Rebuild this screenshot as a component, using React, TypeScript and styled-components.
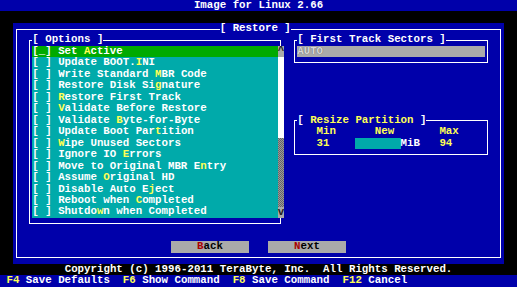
import React from "react";
import styled, { createGlobalStyle } from "styled-components";

// text-mode screen: 80 columns x 25 rows squeezed into 517x287
const CW = 517 / 80;
const RH = 287 / 25;
const cells = (n: number) => `${(n * CW).toFixed(3)}px`;
const rows = (n: number) => `${(n * RH).toFixed(3)}px`;

const C = {
  black: "#000000",
  blue: "#0000aa",
  cyan: "#00aaaa",
  green: "#00aa00",
  gray: "#aaaaaa",
  white: "#ffffff",
  yellow: "#ffff55",
  red: "#aa0000",
};

const GlobalStyle = createGlobalStyle`
  html, body {
    margin: 0;
    padding: 0;
    background: #000;
  }
  body {
    font-family: "Liberation Mono", "DejaVu Sans Mono", monospace;
    font-size: 10.77px;
    line-height: ${rows(1)};
    font-weight: bold;
    color: #fff;
  }
`;

const Screen = styled.div`
  width: 517px;
  height: 287px;
  display: flex;
  flex-direction: column;
  overflow: hidden;
  background: ${C.black};
`;

const Bar = styled.div<{ $bg: string; $center?: boolean }>`
  height: ${rows(1)};
  background: ${(p) => p.$bg};
  white-space: pre;
  text-align: ${(p) => (p.$center ? "center" : "left")};
  color: ${C.white};
`;

const MainRow = styled.div`
  height: ${rows(21)};
  display: flex;
  padding-left: ${cells(2)};
`;

const Frame = styled.div<{ $w: number; $h: number; $bg?: string }>`
  position: relative;
  flex: none;
  width: ${(p) => cells(p.$w)};
  height: ${(p) => rows(p.$h)};
  background: ${(p) => p.$bg ?? "transparent"};
  display: flex;
  flex-direction: column;

  &::before {
    content: "";
    position: absolute;
    left: ${cells(0.5)};
    right: ${cells(0.5)};
    top: ${rows(0.5)};
    bottom: ${rows(0.5)};
    border: 1px solid ${C.white};
    pointer-events: none;
  }
`;

const FrameTitle = styled.div<{ $indent: number }>`
  height: ${rows(1)};
  padding-left: ${(p) => cells(p.$indent)};
  white-space: pre;
`;

const TitleText = styled.span<{ $color?: string }>`
  position: relative;
  display: inline-block;
  height: ${rows(1)};
  background: ${C.blue};
  color: ${(p) => p.$color ?? C.white};
`;

const Bracket = styled.span`
  color: ${C.white};
`;

const WindowBody = styled.div`
  flex: 1;
  display: flex;
  flex-direction: column;
  padding: 0 ${cells(1)};
`;

const TopSection = styled.div`
  height: ${rows(17)};
  display: flex;
  padding-left: ${cells(1)};
  gap: ${cells(1)};
`;

const ListArea = styled.div`
  height: ${rows(15)};
  display: flex;
  padding-left: ${cells(1)};
`;

const List = styled.div`
  width: ${cells(38)};
  background: ${C.cyan};
`;

const Item = styled.div<{ $selected?: boolean }>`
  height: ${rows(1)};
  white-space: pre;
  color: ${C.white};
  background: ${(p) => (p.$selected ? C.green : C.cyan)};
`;

const Hot = styled.span<{ $color?: string }>`
  color: ${(p) => p.$color ?? C.yellow};
`;

const Scroll = styled.div`
  position: relative;
  width: ${cells(1)};
  display: flex;
  flex-direction: column;
`;

const ScrollArrow = styled.div`
  height: ${rows(1)};
  background: ${C.gray};
  color: #202020;
  text-align: center;
`;

const ScrollThumb = styled.div`
  height: ${rows(7)};
  background: ${C.white};
`;

const ScrollTrack = styled.div`
  flex: 1;
  background-color: #808080;
  background-image: repeating-conic-gradient(#9a9a9a 0 25%, #666 0 50%);
  background-size: 2px 2px;
`;

const RightColumn = styled.div`
  width: ${cells(31)};
  display: flex;
  flex-direction: column;
`;

const Spacer = styled.div<{ $rows: number }>`
  height: ${(p) => rows(p.$rows)};
`;

const FieldRow = styled.div`
  height: ${rows(1)};
  padding: 0 ${cells(1)};
  display: flex;
`;

const TextField = styled.div`
  flex: 1;
  background: ${C.gray};
  color: #d8d8d8;
  white-space: pre;
  text-shadow: 0 0 1px #505050;
`;

const ResizeGrid = styled.div`
  display: grid;
  grid-template-columns: ${cells(3)} ${cells(6)} ${cells(7)} ${cells(6)} 1fr;
  grid-auto-rows: ${rows(1)};
  padding: 0 ${cells(1)};
  white-space: pre;
`;

const Label = styled.span<{ $pad?: number; $color?: string }>`
  padding-left: ${(p) => cells(p.$pad ?? 0)};
  color: ${(p) => p.$color ?? C.yellow};
`;

const SizeInput = styled.div`
  background: ${C.cyan};
`;

const ButtonRow = styled.div`
  height: ${rows(1)};
  display: flex;
  justify-content: center;
  gap: ${cells(3)};
`;

const Button = styled.div`
  width: ${cells(12)};
  background: ${C.gray};
  color: ${C.black};
  text-align: center;
  white-space: pre;
`;

type Option = { label: string; hot: number };

const options: Option[] = [
  { label: "Set Active", hot: 4 },
  { label: "Update BOOT.INI", hot: 12 },
  { label: "Write Standard MBR Code", hot: 15 },
  { label: "Restore Disk Signature", hot: 15 },
  { label: "Restore First Track", hot: 0 },
  { label: "Validate Before Restore", hot: 0 },
  { label: "Validate Byte-for-Byte", hot: 9 },
  { label: "Update Boot Partition", hot: 15 },
  { label: "Wipe Unused Sectors", hot: 0 },
  { label: "Ignore IO Errors", hot: 10 },
  { label: "Move to Original MBR Entry", hot: 22 },
  { label: "Assume Original HD", hot: 7 },
  { label: "Disable Auto Eject", hot: 14 },
  { label: "Reboot when Completed", hot: 12 },
  { label: "Shutdown when Completed", hot: 6 },
];

const HotText: React.FC<{ text: string; hot: number; color?: string }> = ({ text, hot, color }) => (
  <>
    {text.slice(0, hot)}
    <Hot $color={color}>{text[hot]}</Hot>
    {text.slice(hot + 1)}
  </>
);

const BoxTitle: React.FC<{ indent: number; title: string; color?: string }> = ({ indent, title, color }) => (
  <FrameTitle $indent={indent}>
    <TitleText $color={color}>
      <Bracket>[ </Bracket>
      {title}
      <Bracket> ]</Bracket>
    </TitleText>
  </FrameTitle>
);

const keys = [
  { key: "F4", text: "Save Defaults" },
  { key: "F6", text: "Show Command" },
  { key: "F8", text: "Save Command" },
  { key: "F12", text: "Cancel" },
];

const App: React.FC = () => {
  return (
    <Screen>
      <GlobalStyle />
      <Bar $bg={C.blue} $center>Image for Linux 2.66</Bar>
      <Bar $bg={C.black} />
      <MainRow>
        <Frame $w={76} $h={21} $bg={C.blue}>
          <BoxTitle indent={32} title="Restore" />
          <WindowBody>
            <TopSection>
              <Frame $w={40} $h={17}>
                <BoxTitle indent={1} title="Options" />
                <ListArea>
                  <List>
                    {options.map((o, i) => (
                      <Item key={o.label} $selected={i === 0}>
                        {i === 0 ? "[_] " : "[ ] "}
                        <HotText text={o.label} hot={o.hot} />
                      </Item>
                    ))}
                  </List>
                  <Scroll>
                    <ScrollArrow>^</ScrollArrow>
                    <ScrollThumb />
                    <ScrollTrack />
                    <ScrollArrow>v</ScrollArrow>
                  </Scroll>
                </ListArea>
              </Frame>
              <RightColumn>
                <Frame $w={31} $h={3}>
                  <BoxTitle indent={1} title="First Track Sectors" />
                  <FieldRow>
                    <TextField>AUTO</TextField>
                  </FieldRow>
                </Frame>
                <Spacer $rows={4} />
                <Frame $w={31} $h={4}>
                  <BoxTitle indent={1} title="Resize Partition" color={C.yellow} />
                  <ResizeGrid>
                    <span />
                    <Label>Min</Label>
                    <Label $pad={3}>New</Label>
                    <span />
                    <Label>Max</Label>
                    <span />
                    <Label>31</Label>
                    <SizeInput />
                    <Label $color={C.white}>MiB</Label>
                    <Label>94</Label>
                  </ResizeGrid>
                </Frame>
              </RightColumn>
            </TopSection>
            <Spacer $rows={1} />
            <ButtonRow>
              <Button>
                <HotText text="Back" hot={0} color={C.red} />
              </Button>
              <Button>
                <HotText text="Next" hot={0} color={C.red} />
              </Button>
            </ButtonRow>
          </WindowBody>
        </Frame>
      </MainRow>
      <Bar $bg={C.black} $center>
        Copyright (c) 1996-2011 TeraByte, Inc.  All Rights Reserved.
      </Bar>
      <Bar $bg={C.blue}>
        {" "}
        {keys.map((k, i) => (
          <React.Fragment key={k.key}>
            <Hot>{k.key}</Hot> {k.text}
            {i < keys.length - 1 ? "  " : ""}
          </React.Fragment>
        ))}
      </Bar>
    </Screen>
  );
};

export default App;
